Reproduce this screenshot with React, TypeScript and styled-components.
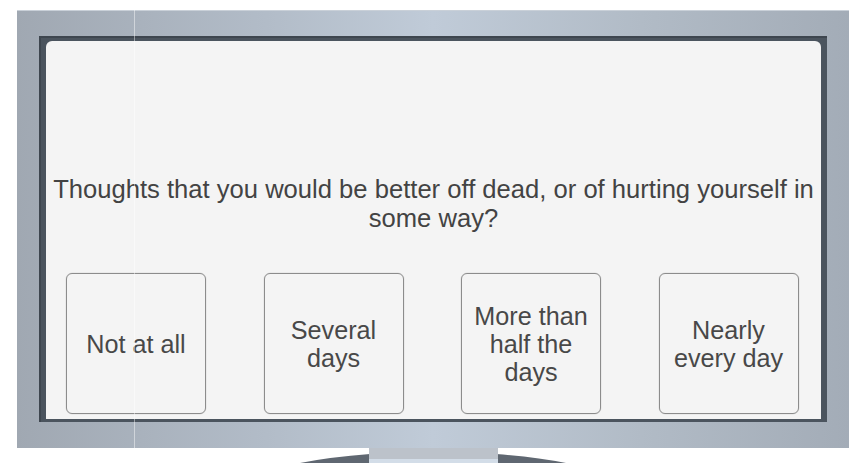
import React from "react";
import styled, { createGlobalStyle } from "styled-components";

const Global = createGlobalStyle`
  html, body { margin: 0; padding: 0; background: #ffffff; }
  body { font-family: "Liberation Sans", Arial, sans-serif; }
`;

const Page = styled.div`
  position: relative;
  width: 862px;
  height: 463px;
  overflow: hidden;
  display: flex;
  flex-direction: column;
  align-items: flex-start;
  padding: 10px 0 0 17px;
  box-sizing: border-box;
`;

const Frame = styled.div`
  width: 832px;
  height: 438px;
  box-sizing: border-box;
  padding: 26px 22px 26px 22px;
  display: flex;
  background: linear-gradient(90deg, #a0a8b2 0%, #b2bcc8 30%, #c0cbd8 50%, #b1bbc6 75%, #a3acb7 100%);
  box-shadow: inset 0 1px 0 #c9d0d8;
`;

const Bezel = styled.div`
  flex: 1;
  display: flex;
  background: #4b545e;
  padding: 5px 6px 3px 7px;
  box-shadow: inset 2px 2px 0 #3e464f;
`;

const Screen = styled.div`
  flex: 1;
  background: #f4f4f4;
  border-radius: 6px 6px 0 0;
  display: flex;
  flex-direction: column;
  justify-content: flex-end;
  align-items: center;
  padding: 0 0 5px 0;
`;

const Question = styled.p`
  margin: 0 0 40px 0;
  padding: 0 2px;
  text-align: center;
  font-size: 25.6px;
  line-height: 29px;
  color: #434343;
`;

const Options = styled.div`
  display: flex;
  gap: 57.5px;
  justify-content: center;
  width: 100%;
  padding-right: 2.5px;
  box-sizing: border-box;
`;

const Option = styled.button`
  width: 140px;
  height: 141px;
  box-sizing: border-box;
  border: 1px solid #8c8c8c;
  border-radius: 6px;
  background: #f4f4f4;
  box-shadow: 0 0 0 0.5px rgba(0,0,0,0.08);
  font-family: "Liberation Sans", Arial, sans-serif;
  font-size: 25.2px;
  line-height: 28px;
  color: #484848;
  padding: 0 6px;
  display: flex;
  align-items: center;
  justify-content: center;
  text-align: center;
`;

const Stand = styled.div`
  width: 100%;
  display: flex;
  justify-content: flex-start;
  padding-left: 283px;
  box-sizing: border-box;
`;

const Streak = styled.div`
  position: absolute;
  left: 134px;
  top: 10px;
  width: 1px;
  height: 438px;
  background: rgba(255, 255, 255, 0.45);
  pointer-events: none;
`;

const options = ["Not at all", "Several days", "More than half the days", "Nearly every day"];

export default function App() {
  return (
    <>
      <Global />
      <Page>
        <Frame>
          <Bezel>
            <Screen>
              <Question>
                Thoughts that you would be better off dead, or of hurting yourself in some way?
              </Question>
              <Options>
                {options.map((o) => (
                  <Option key={o}>{o}</Option>
                ))}
              </Options>
            </Screen>
          </Bezel>
        </Frame>
        <Stand>
          <svg width="266" height="15" viewBox="0 0 266 15">
            <path d="M0 15 Q 30 9 70 6 L 196 6 Q 236 9 266 15 Z" fill="#5f6771" />
            <rect x="69" y="0" width="129" height="11" fill="#bcc2ca" />
            <rect x="69" y="11" width="129" height="4" fill="#d3dde8" />
          </svg>
        </Stand>
        <Streak />
      </Page>
    </>
  );
}
